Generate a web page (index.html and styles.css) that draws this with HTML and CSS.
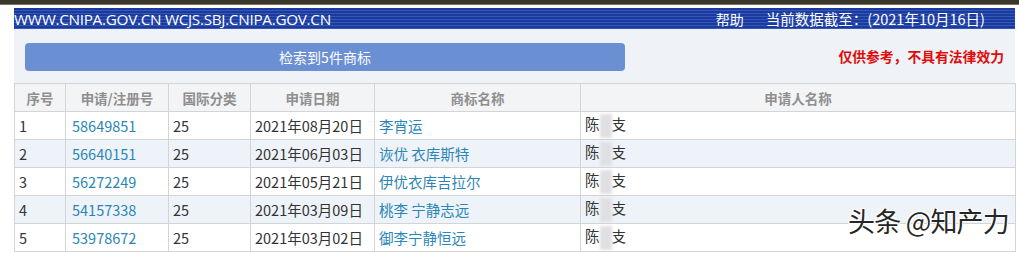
FILE: index.html
```html
<!DOCTYPE html>
<html lang="zh-CN">
<head>
<meta charset="utf-8">
<title>商标检索</title>
<link rel="stylesheet" href="styles.css">
</head>
<body>
<div class="topbar"></div>
<div class="page">
  <div class="header">
    <span class="site">WWW.CNIPA.GOV.CN WCJS.SBJ.CNIPA.GOV.CN</span>
    <span class="help">帮助</span>
    <span class="date">当前数据截至：(2021年10月16日)</span>
  </div>
  <div class="panel">
    <div class="btn">检索到5件商标</div>
    <div class="notice">仅供参考，不具有法律效力</div>
  </div>
  <table class="grid">
    <colgroup>
      <col class="c1"><col class="c2"><col class="c3"><col class="c4"><col class="c5"><col class="c6">
    </colgroup>
    <thead>
      <tr><th>序号</th><th>申请/注册号</th><th>国际分类</th><th>申请日期</th><th>商标名称</th><th>申请人名称</th></tr>
    </thead>
    <tbody>
      <tr><td>1</td><td class="lnk num">58649851</td><td>25</td><td>2021年08月20日</td><td class="lnk">李宵运</td><td>陈<span class="mask"></span>支</td></tr>
      <tr class="alt"><td>2</td><td class="lnk num">56640151</td><td>25</td><td>2021年06月03日</td><td class="lnk">诙优 衣库斯特</td><td>陈<span class="mask"></span>支</td></tr>
      <tr><td>3</td><td class="lnk num">56272249</td><td>25</td><td>2021年05月21日</td><td class="lnk">伊优衣库吉拉尔</td><td>陈<span class="mask"></span>支</td></tr>
      <tr class="alt"><td>4</td><td class="lnk num">54157338</td><td>25</td><td>2021年03月09日</td><td class="lnk">桃李 宁静志远</td><td>陈<span class="mask"></span>支</td></tr>
      <tr><td>5</td><td class="lnk num">53978672</td><td>25</td><td>2021年03月02日</td><td class="lnk">御李宁静恒远</td><td>陈<span class="mask"></span>支</td></tr>
    </tbody>
  </table>
  <div class="watermark">头条 @知产力</div>
</div>
</body>
</html>
```
FILE: styles.css
```css
html, body {
  margin: 0;
  padding: 0;
  background: #ffffff;
}
body {
  width: 1019px;
  height: 268px;
  overflow: hidden;
  font-family: "Noto Sans CJK SC", "Noto Sans", sans-serif;
  position: relative;
}
.topbar {
  height: 4px;
  background: #3b382b;
  border-bottom: 1px solid #77756c;
  margin-bottom: 3px;
}
.page {
  margin-left: 14px;
  width: 1001px;
  position: relative;
}
.header {
  height: 21px;
  display: flex;
  align-items: center;
  color: #ffffff;
  background: repeating-linear-gradient(to bottom, #1b3a9e 0px, #1b3a9e 2px, #3557b9 2px, #3557b9 3px);
}
.site {
  font-family: "Open Sans", "Noto Sans", sans-serif;
  font-size: 15.3px;
  letter-spacing: -0.3px;
  flex: 1;
}
.help {
  font-size: 14px;
  margin-right: 22px;
}
.date {
  font-size: 14.5px;
  margin-right: 30px;
}
.panel {
  height: 54px;
  background: #eff3f7;
  display: flex;
  align-items: flex-start;
  padding-left: 11px;
  padding-right: 11px;
  box-sizing: border-box;
}
.btn {
  margin-top: 14px;
  width: 600px;
  height: 28px;
  border-radius: 4px;
  background: #6b8fd3;
  color: #ffffff;
  font-size: 14px;
  display: flex;
  align-items: center;
  justify-content: center;
}
.notice {
  margin-left: auto;
  margin-top: 19px;
  color: #e00b0b;
  font-weight: bold;
  font-size: 13.8px;
  line-height: 16px;
}
.grid {
  width: 1001px;
  border-collapse: collapse;
  table-layout: fixed;
  font-size: 14.5px;
}
.c1 { width: 51px; }
.c2 { width: 103px; }
.c3 { width: 82px; }
.c4 { width: 124px; }
.c5 { width: 206px; }
.c6 { width: 435px; }
.grid th, .grid td {
  border: 1px solid #d3d4d6;
  height: 27px;
  padding: 0 0 0 4px;
  white-space: nowrap;
  overflow: hidden;
}
.grid td.num {
  padding-left: 6px;
}
.grid th {
  background: #f3f4f6;
  color: #8f8f8f;
  font-size: 13.5px;
  font-weight: bold;
  text-align: center;
  padding: 0;
}
.grid td {
  color: #333333;
  background: #ffffff;
}
.grid tr.alt td {
  background: #eef3f9;
}
.grid td.lnk {
  color: #2b86b5;
}
.mask {
  display: inline-block;
  width: 12px;
  height: 24px;
  vertical-align: middle;
  background: #e0e0e4;
  filter: blur(1.5px);
}
.watermark {
  position: absolute;
  left: 834px;
  top: 193px;
  font-size: 27px;
  color: #262626;
  letter-spacing: -0.8px;
  text-shadow: 1px 1px 0 #ffffff, -1px -1px 0 #ffffff, 1px -1px 0 #ffffff, -1px 1px 0 #ffffff;
}
```
